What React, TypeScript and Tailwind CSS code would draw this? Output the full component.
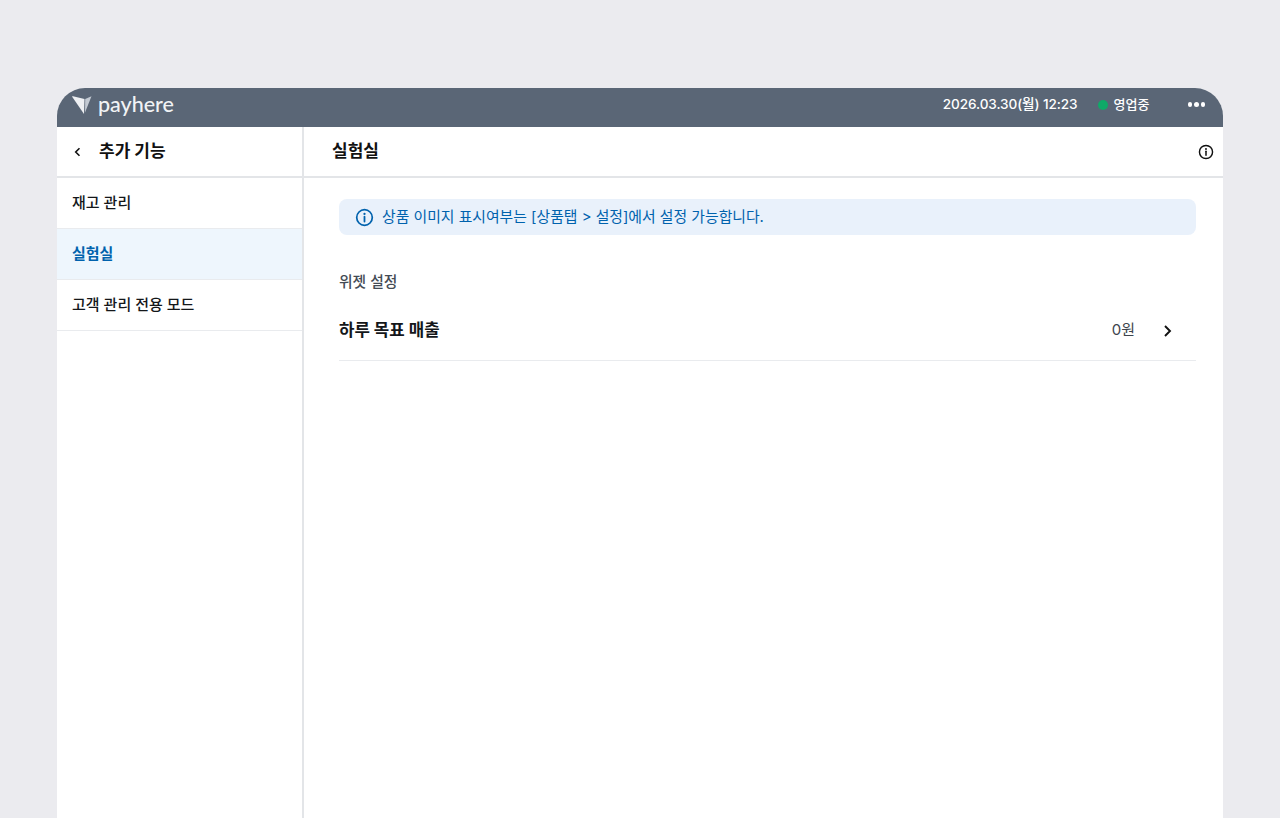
import React from 'react';

const font = { fontFamily: 'Inter, "Noto Sans CJK KR", sans-serif' };

function InfoIcon({ size, className }: { size: number; className: string }) {
  return (
    <svg width={size} height={size} viewBox="0 0 20 20" fill="none" className={className}>
      <circle cx="10" cy="10" r="8.2" stroke="currentColor" strokeWidth="1.8" />
      <path d="M10 9.2v5" stroke="currentColor" strokeWidth="1.9" strokeLinecap="round" />
      <circle cx="10" cy="6.2" r="1.2" fill="currentColor" />
    </svg>
  );
}

function Logo() {
  return (
    <svg width="20" height="20" viewBox="0 0 20 20">
      <path d="M0 1.5Q0 1 1 1.2L12.5 4L12 19Z" fill="#eef0f3" />
      <path d="M13.2 4L19.5 1.2L13 17.5Z" fill="#c3cad3" />
    </svg>
  );
}

export default function App() {
  const items = ['재고 관리', '실험실', '고객 관리 전용 모드'];

  return (
    <div className="h-screen overflow-hidden bg-[#ebebef] px-[57px] pt-[88px]" style={font}>
      <div className="flex h-full flex-col rounded-t-[28px] bg-white overflow-hidden">
        {/* Top bar */}
        <div className="flex h-[39px] shrink-0 items-center bg-[#5a6676] pb-[6px] pl-[15px] pr-[18px] text-white">
          <Logo />
          <span className="ml-[6px] text-[21.5px] font-medium leading-none text-[#f1f3f5]" style={{ fontFamily: 'Lato, sans-serif' }}>payhere</span>
          <span className="ml-auto text-[13.6px] font-medium tracking-[-0.1px]">2026.03.30(월) 12:23</span>
          <span className="ml-[20px] h-[10px] w-[10px] rounded-full bg-[#0fa968]" />
          <span className="ml-[6px] w-[74px] text-[13px] font-medium">영업중</span>
          <span className="flex gap-[2px]">
            <span className="h-[4.5px] w-[4.5px] rounded-full bg-white" />
            <span className="h-[4.5px] w-[4.5px] rounded-full bg-white" />
            <span className="h-[4.5px] w-[4.5px] rounded-full bg-white" />
          </span>
        </div>

        <div className="flex min-h-0 flex-1">
          {/* Sidebar */}
          <div className="w-[247px] shrink-0 border-r-2 border-[#e3e5e8]">
            <div className="flex h-[51px] items-center border-b-2 border-[#e3e5e8] pl-[15px]">
              <svg width="12" height="12" viewBox="0 0 12 12" fill="none">
                <path d="M7.5 2.2L3.7 6l3.8 3.8" stroke="#111" strokeWidth="1.6" />
              </svg>
              <span className="ml-[15px] pt-px text-[17px] font-bold text-[#111]">추가 기능</span>
            </div>
            {items.map((item) => (
              <div
                key={item}
                className={
                  item === '실험실'
                    ? 'flex h-[51px] items-center border-b border-[#e9ebee] bg-[#eef6fd] pl-[15px] text-[15px] font-semibold text-[#0062ad]'
                    : 'flex h-[51px] items-center border-b border-[#e9ebee] pl-[15px] text-[15px] font-medium text-[#14171a]'
                }
              >
                {item}
              </div>
            ))}
          </div>

          {/* Content */}
          <div className="min-w-0 flex-1">
            <div className="flex h-[51px] items-center justify-between border-b-2 border-[#e3e5e8] pl-[28px] pr-[9px]">
              <span className="pt-px text-[17px] font-bold text-[#111]">실험실</span>
              <InfoIcon size={16} className="text-[#111]" />
            </div>
            <div className="pl-[35px] pr-[27px] pt-[21px]">
              <div className="flex h-[36px] items-center rounded-[8px] bg-[#e9f1fb] pl-[16px] text-[#0062ad]">
                <InfoIcon size={19} className="text-[#0062ad]" />
                <span className="ml-[8px] text-[14.85px]">상품 이미지 표시여부는 [상품탭 &gt; 설정]에서 설정 가능합니다.</span>
              </div>
              <div className="mt-[36px] text-[14.8px] font-medium leading-[22px] text-[#444b55]">위젯 설정</div>
              <div className="mt-[8px] flex h-[60px] items-center justify-between border-b border-[#e9ebee]">
                <span className="text-[16.8px] font-bold text-[#14171a]">하루 목표 매출</span>
                <span className="flex items-center">
                  <span className="text-[15px] text-[#3d444d]">0원</span>
                  <svg width="12" height="14" viewBox="0 0 12 14" fill="none" className="ml-[27px] mr-[22px]">
                    <path d="M3 2l5 5-5 5" stroke="#111" strokeWidth="1.9" />
                  </svg>
                </span>
              </div>
            </div>
          </div>
        </div>
      </div>
    </div>
  );
}
